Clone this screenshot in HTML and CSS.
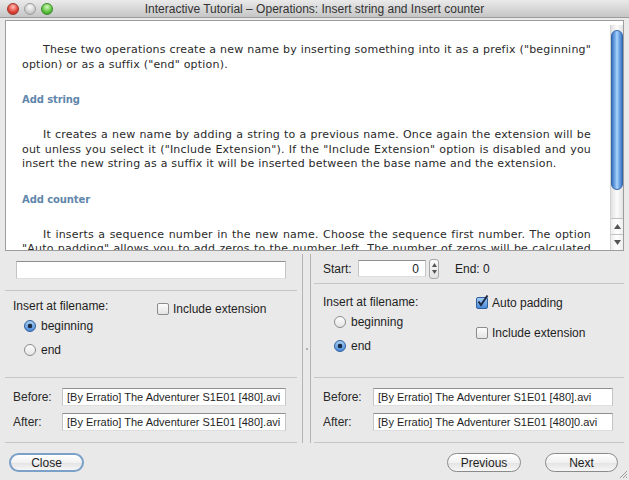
FILE: index.html
```html
<!DOCTYPE html>
<html lang="en">
<head>
    <meta charset="UTF-8">
    <title>Interactive Tutorial</title>
<link rel="stylesheet" href="styles.css">
</head>
<body>
<div class="window">
    <div class="titlebar">
        <div class="lights">
            <span class="light red"></span>
            <span class="light gray"></span>
            <span class="light green"></span>
        </div>
        <div class="title">Interactive Tutorial – Operations: Insert string and Insert counter</div>
        <div></div>
    </div>

    <div class="help">
        <div class="help-text">
            <p>These two operations create a new name by inserting something into it as a prefix ("beginning" option) or as a suffix ("end" option).</p>
            <h3>Add string</h3>
            <p>It creates a new name by adding a string to a previous name. Once again the extension will be out unless you select it ("Include Extension"). If the "Include Extension" option is disabled and you insert the new string as a suffix it will be inserted between the base name and the extension.</p>
            <h3>Add counter</h3>
            <p class="cut">It inserts a sequence number in the new name. Choose the sequence first number. The option "Auto padding" allows you to add zeros to the number left. The number of zeros will be calculated</p>
        </div>
        <div class="scrollbar">
            <div class="thumb"></div>
            <div class="track"></div>
            <div class="arrow">
                <svg width="7" height="5" viewBox="0 0 7 5"><path d="M3.5 0 L7 5 L0 5 Z" fill="#555"/></svg>
            </div>
            <div class="arrow">
                <svg width="7" height="5" viewBox="0 0 7 5"><path d="M0 0 L7 0 L3.5 5 Z" fill="#555"/></svg>
            </div>
        </div>
    </div>

    <div class="split">
        <div class="pane pane-left">
            <div class="sec sec-input">
                <div class="field field-wide"></div>
            </div>
            <div class="sec sec-opts">
                <div class="opt-col">
                    <div class="label">Insert at filename:</div>
                    <div class="radio-row"><span class="radio on"></span>beginning</div>
                    <div class="radio-row"><span class="radio"></span>end</div>
                </div>
                <div class="opt-col check-col">
                    <div class="check-row"><span class="check"></span>Include extension</div>
                </div>
            </div>
            <div class="sec sec-preview">
                <div class="prev-row"><span class="prev-label">Before:</span><div class="field">[By Erratio] The Adventurer S1E01 [480].avi</div></div>
                <div class="prev-row"><span class="prev-label">After:</span><div class="field">[By Erratio] The Adventurer S1E01 [480].avi</div></div>
            </div>
        </div>

        <div class="divider"><span class="grip"></span></div>

        <div class="pane pane-right">
            <div class="sec sec-start">
                <span class="start-label">Start:</span>
                <div class="field field-num">0</div>
                <div class="spinner">
                    <svg width="5" height="4" viewBox="0 0 5 4"><path d="M2.5 0 L5 4 L0 4 Z" fill="#555"/></svg>
                    <svg width="5" height="4" viewBox="0 0 5 4"><path d="M0 0 L5 0 L2.5 4 Z" fill="#555"/></svg>
                </div>
                <span class="end-label">End: 0</span>
            </div>
            <div class="sec sec-opts">
                <div class="opt-col">
                    <div class="label">Insert at filename:</div>
                    <div class="radio-row"><span class="radio"></span>beginning</div>
                    <div class="radio-row"><span class="radio on"></span>end</div>
                </div>
                <div class="opt-col">
                    <div class="check-row"><span class="check on"><svg width="13" height="13" viewBox="0 0 13 13"><path d="M2.5 6.5 L5 10 L11.5 0.5" fill="none" stroke="#1d2b44" stroke-width="2"/></svg></span>Auto padding</div>
                    <div class="check-row second"><span class="check"></span>Include extension</div>
                </div>
            </div>
            <div class="sec sec-preview">
                <div class="prev-row"><span class="prev-label">Before:</span><div class="field">[By Erratio] The Adventurer S1E01 [480].avi</div></div>
                <div class="prev-row"><span class="prev-label">After:</span><div class="field">[By Erratio] The Adventurer S1E01 [480]0.avi</div></div>
            </div>
        </div>
    </div>

    <div class="buttons">
        <button class="btn btn-default">Close</button>
        <button class="btn btn-prev">Previous</button>
        <button class="btn btn-next">Next</button>
    </div>

    <svg class="resize-grip" width="10" height="10" viewBox="0 0 10 10">
        <path d="M9 2 L2 9 M9 5 L5 9 M9 8 L8 9" stroke="#9a9a9a" stroke-width="1"/>
    </svg>
</div>
</body>
</html>
```

FILE: styles.css
```css
* {
    box-sizing: border-box;
}
body {
    margin: 0;
    background-color: #e9e9e9;
    font-family: "Liberation Sans", Arial, sans-serif;
    font-size: 12px;
    color: #1e1e1e;
}
.window {
    width: 629px;
    height: 480px;
    position: relative;
    overflow: hidden;
    display: flex;
    flex-direction: column;
}

/* title bar */
.titlebar {
    flex: none;
    height: 18px;
    border-bottom: 1px solid #9c9c9c;
    background: linear-gradient(#eaeaea, #c6c6c6);
    display: grid;
    grid-template-columns: 1fr auto 1fr;
    align-items: center;
}
.lights {
    display: flex;
    gap: 5px;
    padding-left: 7px;
}
.light {
    width: 12px;
    height: 12px;
    border-radius: 50%;
}
.red {
    background: radial-gradient(circle at 50% 30%, #ffc4bc, #e4483d 55%, #a92a1f);
    border: 1px solid #a0352b;
}
.gray {
    background: radial-gradient(circle at 50% 30%, #fafafa, #d3d3d3 55%, #a9a9a9);
    border: 1px solid #9f9f9f;
}
.green {
    background: radial-gradient(circle at 50% 30%, #d4f8bf, #62c644 55%, #2e8a1e);
    border: 1px solid #3b8a2a;
}
.title {
    color: #333;
    font-size: 12px;
    white-space: nowrap;
}

/* help text */
.help {
    flex: none;
    height: 231px;
    margin: 2px 5px 0;
    border: 1px solid #9d9d9d;
    background-color: #fff;
    display: flex;
}
.help-text {
    flex: 1;
    overflow: hidden;
    padding: 22px 19px 0 16px;
    font-family: "DejaVu Sans", Verdana, sans-serif;
    font-size: 11px;
    line-height: 14.5px;
    letter-spacing: 0.2px;
    color: #2a2a2a;
}
.help-text p {
    margin: 0 0 21px;
    text-indent: 21px;
    text-align: justify;
}
.help-text p.cut {
    margin-bottom: 0;
    text-align-last: justify;
}
.help-text h3 {
    margin: 0 0 21px;
    font-size: 10px;
    line-height: 14px;
    letter-spacing: -0.1px;
    color: #5f86ab;
}
.scrollbar {
    width: 13px;
    margin-top: 4px;
    display: flex;
    flex-direction: column;
    border-left: 1px solid #d2d2d2;
    background: linear-gradient(to right, #e2e2e2, #fbfbfb 50%, #e2e2e2);
}
.thumb {
    height: 160px;
    margin-top: 5px;
    border-radius: 6px;
    border: 1px solid #3466a8;
    background: linear-gradient(to right, #3b74c4, #7fb3ec 35%, #b0d5fa 50%, #7fb3ec 65%, #3b74c4);
}
.track {
    flex: 1;
}
.arrow {
    height: 16px;
    border-top: 1px solid #c2c2c2;
    display: flex;
    align-items: center;
    justify-content: center;
    background: linear-gradient(to right, #eeeeee, #ffffff 50%, #eeeeee);
}

/* split panes */
.split {
    flex: none;
    height: 189px;
    margin: 3px 5px 0;
    display: flex;
}
.pane {
    display: grid;
}
.pane-left {
    width: 298px;
    border-right: 1px solid #b4b4b4;
    grid-template-rows: 37px 87px 65px;
}
.pane-left .sec {
    margin-right: 5px;
}
.pane-right {
    flex: 1;
    border-left: 1px solid #b4b4b4;
    grid-template-rows: 30px 94px 65px;
}
.pane-right .sec {
    margin-left: 3px;
}
.divider {
    width: 7px;
    display: flex;
    align-items: center;
    justify-content: center;
}
.grip {
    width: 2px;
    height: 2px;
    border-radius: 1px;
    background-color: #9a9a9a;
}
.sec {
    border-bottom: 1px solid #c6c6c6;
}

.field {
    height: 18px;
    line-height: 17px;
    padding-left: 4px;
    font-size: 11px;
    background-color: #fff;
    border: 1px solid #c4c4c4;
    border-top-color: #8f8f8f;
    border-bottom-color: #dedede;
    white-space: nowrap;
    overflow: hidden;
}
.sec-input {
    padding: 7px 0 0 11px;
}
.field-wide {
    width: 270px;
}

.sec-opts {
    display: flex;
}
.pane-left .sec-opts {
    padding: 8px 0 0 8px;
}
.pane-left .opt-col:first-child {
    width: 144px;
}
.check-col {
    padding-top: 2px;
}
.pane-right .sec-opts {
    padding: 11px 0 0 9px;
}
.pane-right .opt-col:first-child {
    width: 153px;
}
.label {
    line-height: 15px;
}
.radio-row {
    height: 24px;
    display: flex;
    align-items: center;
}
.radio {
    width: 12px;
    height: 12px;
    margin: 0 5px 0 11px;
    border-radius: 50%;
    border: 1px solid #8c8c8c;
    background: linear-gradient(#fdfdfd, #e4e4e4);
}
.radio.on {
    border-color: #2e5f9e;
    background: radial-gradient(circle, #1b2b44 0, #1b2b44 2px, transparent 2.6px), linear-gradient(#a4ccf2, #4a8ad8);
}
.check-row {
    height: 15px;
    display: flex;
    align-items: center;
}
.check-row.second {
    margin-top: 15px;
}
.check {
    position: relative;
    width: 12px;
    height: 12px;
    margin-right: 4px;
    border-radius: 2px;
    border: 1px solid #8c8c8c;
    background: linear-gradient(#fdfdfd, #e4e4e4);
}
.check.on {
    border-color: #2e5f9e;
    background: linear-gradient(#a4ccf2, #4a8ad8);
}
.check svg {
    position: absolute;
    left: -1px;
    top: -3px;
}

.sec-preview {
    padding-top: 10px;
}
.pane-left .sec-preview {
    padding-left: 8px;
}
.pane-right .sec-preview {
    padding-left: 9px;
}
.prev-row {
    display: flex;
    align-items: center;
    margin-bottom: 7px;
}
.prev-label {
    color: #2a2a2a;
}
.pane-left .prev-label {
    width: 49px;
}
.pane-left .prev-row .field {
    width: 224px;
}
.pane-right .prev-label {
    width: 50px;
}
.pane-right .prev-row .field {
    width: 240px;
}

.sec-start {
    display: flex;
    align-items: center;
    padding-left: 9px;
}
.start-label {
    width: 35px;
}
.field-num {
    width: 68px;
    height: 17px;
    line-height: 16px;
    text-align: right;
    padding-right: 6px;
    font-size: 12px;
}
.spinner {
    width: 10px;
    height: 20px;
    margin-left: 3px;
    border: 1px solid #a8a8a8;
    border-radius: 3px;
    background: linear-gradient(#fbfbfb, #e2e2e2);
    display: flex;
    flex-direction: column;
    align-items: center;
    justify-content: space-evenly;
}
.end-label {
    margin-left: 16px;
}

/* bottom buttons */
.buttons {
    flex: 1;
    display: flex;
    align-items: flex-start;
    padding: 10px 11px 0 9px;
}
.btn {
    height: 19px;
    padding: 0;
    font-family: "Liberation Sans", Arial, sans-serif;
    font-size: 12px;
    color: #1e1e1e;
    border: 1px solid #8a8a8a;
    border-radius: 10px;
    background: linear-gradient(#ffffff, #f1f1f1 50%, #e3e3e3 51%, #f6f6f6);
}
.btn-default {
    width: 75px;
    border: 2px solid #7ba1c9;
}
.btn-prev {
    width: 74px;
    margin-left: auto;
}
.btn-next {
    width: 73px;
    margin-left: 24px;
}
.resize-grip {
    position: absolute;
    right: 1px;
    bottom: 1px;
}
```
